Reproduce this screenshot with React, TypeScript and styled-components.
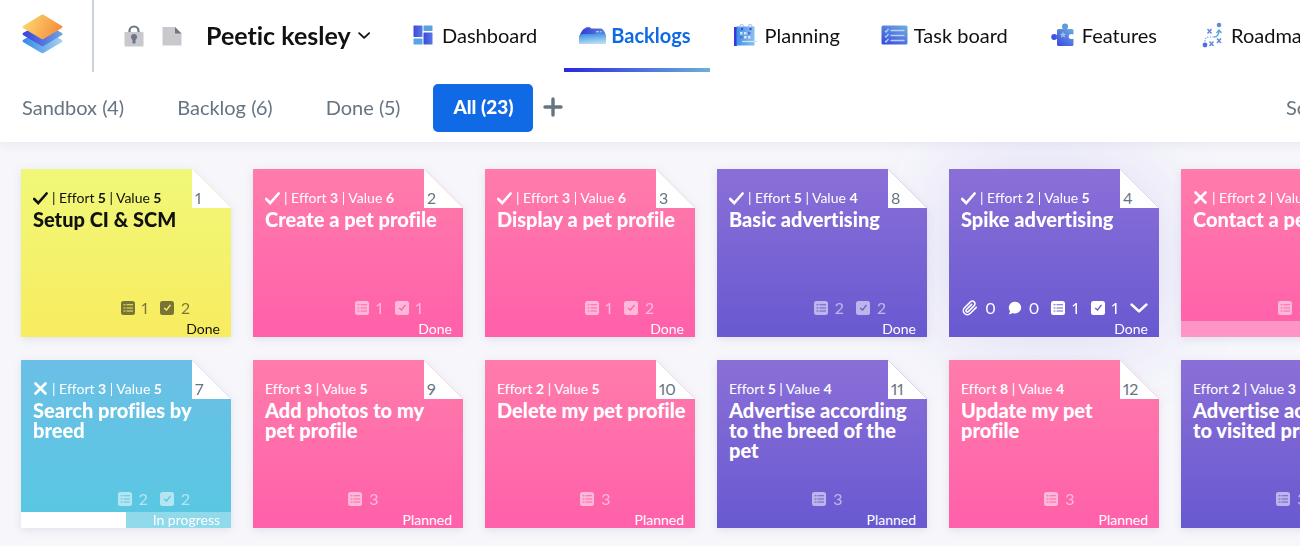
import React from "react";
import styled, { createGlobalStyle, css } from "styled-components";

const GlobalStyle = createGlobalStyle`
  *, *::before, *::after { box-sizing: border-box; }
  html, body, #root { height: 100%; }
  body {
    margin: 0;
    overflow-x: hidden;
    background: #f6f6fb;
    color: #111;
    font-family: Lato, "Liberation Sans", sans-serif;
    font-variant-ligatures: none;
    font-variant-numeric: proportional-nums;
  }
  button { font: inherit; color: inherit; border: 0; padding: 0; background: none; cursor: pointer; }
  a { color: inherit; text-decoration: none; }
  h1, h2, p { margin: 0; }
`;

const Page = styled.div`
  min-height: 100%;
  overflow: hidden;
`;

const Top = styled.header`
  position: relative;
  z-index: 2;
  min-width: 1360px;
  background: #fff;
  box-shadow: 0 0 12px rgba(60, 60, 110, 0.1);
`;

const Bar = styled.div`
  display: flex;
  align-items: center;
  height: 72px;
`;

const HomeLink = styled.a`
  display: flex;
  align-items: center;
  align-self: stretch;
  padding: 0 29px 4px 22px;
  border-right: 2px solid #ccd2dc;
`;

const ProjectFlags = styled.div`
  display: flex;
  align-items: center;
  gap: 18px;
  padding: 0 24px 0 30px;
`;

const ProjectButton = styled.button`
  display: flex;
  align-items: center;
  gap: 7px;
  width: 164px;
  padding-bottom: 2px;
  white-space: nowrap;
`;

const ProjectName = styled.h1`
  font-size: 25px;
  line-height: 32px;
  font-weight: 700;
`;

const MainNav = styled.nav`
  display: flex;
  align-self: stretch;
  gap: 8px;
  margin-left: 25px;
`;

const NavLink = styled.a<{ $active?: boolean }>`
  position: relative;
  display: flex;
  align-items: center;
  gap: 5px;
  padding: 0 19px 2px 14px;
  font-size: 20px;
  line-height: 28px;
  white-space: nowrap;
  ${(p) =>
    p.$active &&
    css`
      color: #106ae6;
      font-weight: 700;
      &::after {
        content: "";
        position: absolute;
        left: 0;
        right: 0;
        bottom: 0;
        height: 4px;
        background: linear-gradient(90deg, #2a27e0, #6bb0d8);
      }
    `}
`;

const NavIcon = styled.span`
  display: flex;
  justify-content: center;
  width: 28px;
`;

const FilterBar = styled.div`
  display: flex;
  align-items: center;
  height: 70px;
  padding: 2px 20px 0 2px;
  color: #667482;
  font-size: 20px;
  line-height: 28px;
`;

const Filter = styled.button<{ $active?: boolean }>`
  height: 48px;
  margin-right: 13px;
  padding: 0 20px 2px;
  border-radius: 5px;
  white-space: nowrap;
  ${(p) =>
    p.$active &&
    css`
      margin-right: 10px;
      background: #106ae6;
      color: #fff;
      font-size: 19px;
      font-weight: 900;
    `}
`;

const AddButton = styled.button`
  display: flex;
  padding-bottom: 2px;
`;

const SortButton = styled.button`
  width: 54px;
  margin-left: auto;
  padding-bottom: 2px;
  text-align: left;
`;

const Board = styled.main`
  display: grid;
  grid-template-columns: repeat(6, 210px);
  gap: 23px 22px;
  padding: 27px 21px 18px;
`;

const CardShell = styled.article<{ $selected?: boolean }>`
  position: relative;
  z-index: ${(p) => (p.$selected ? 0 : 1)};
  filter: ${(p) =>
    p.$selected
      ? "drop-shadow(0 0 40px rgba(90, 70, 210, 0.16))"
      : "drop-shadow(0 2px 4px rgba(40, 40, 90, 0.1))"};
`;

type Tone = "yellow" | "pink" | "purple" | "blue";

const gradients: Record<Tone, string> = {
  yellow: "linear-gradient(#f0f878, #f8ec60)",
  pink: "linear-gradient(#ff7cab, #ff60aa)",
  purple: "linear-gradient(#8b6fd8, #6859d0)",
  blue: "linear-gradient(#6bbfe6, #58c8e2)",
};

const CardBody = styled.div<{ $tone: Tone }>`
  display: flex;
  flex-direction: column;
  height: 168px;
  padding: 19px 0 0;
  background: ${(p) => gradients[p.$tone]};
  color: ${(p) => (p.$tone === "yellow" ? "#111" : "#fff")};
  clip-path: polygon(0 0, 171px 0, 100% 39px, 100% 100%, 0 100%);
`;

const Corner = styled.span`
  position: absolute;
  top: 0;
  right: 0;
  width: 39px;
  height: 39px;
  padding: 19px 0 0 3px;
  background: #fff;
  color: #667482;
  font-size: 16px;
  line-height: 20px;
`;

const Meta = styled.p`
  display: flex;
  align-items: center;
  gap: 4px;
  height: 20px;
  padding-left: 12px;
  font-size: 14px;
  line-height: 20px;
  white-space: nowrap;
`;

const Title = styled.h2`
  padding: 1px 6px 0 12px;
  font-size: 20px;
  line-height: 20px;
  font-weight: 900;
`;

const Counters = styled.div<{ $faded?: boolean }>`
  display: flex;
  align-items: center;
  justify-content: flex-end;
  margin-top: auto;
  padding-right: 11px;
  font-size: 16px;
  line-height: 20px;
  opacity: ${(p) => (p.$faded ? 0.55 : 1)};
`;

const Counter = styled.span<{ $hidden?: boolean }>`
  display: flex;
  align-items: center;
  gap: 7px;
  margin-right: 12px;
  visibility: ${(p) => (p.$hidden ? "hidden" : "visible")};
`;

const Expand = styled.button<{ $hidden?: boolean }>`
  display: flex;
  visibility: ${(p) => (p.$hidden ? "hidden" : "visible")};
`;

const Status = styled.div<{ $progress?: boolean }>`
  height: 16px;
  margin-top: 3px;
  padding-right: 11px;
  background: ${(p) => (p.$progress ? "rgba(255, 255, 255, 0.33)" : "none")};
  font-size: 14px;
  line-height: 15px;
  text-align: right;
`;

const Done = styled.div`
  position: absolute;
  left: 0;
  bottom: 0;
  height: 16px;
  background: #fff;
`;

const Svg = ({ w, h, box, children }: { w: number; h: number; box?: string; children: React.ReactNode }) => (
  <svg width={w} height={h} viewBox={box ?? `0 0 ${w} ${h}`} fill="none" aria-hidden="true">
    {children}
  </svg>
);

const Logo = () => (
  <Svg w={41} h={40}>
    <defs>
      <linearGradient id="lg1" x1="0" y1="0" x2="1" y2="0.3"><stop stopColor="#fbe071" /><stop offset="1" stopColor="#f79040" /></linearGradient>
      <linearGradient id="lg2" x1="0" x2="1"><stop stopColor="#3a3fdd" /><stop offset="1" stopColor="#6da6dc" /></linearGradient>
      <linearGradient id="lg3" x1="0" x2="1"><stop stopColor="#2f8ae8" /><stop offset="1" stopColor="#a9d2ef" /></linearGradient>
    </defs>
    <path d="M1 26 20.500 14 40 26Q41 27 40 28L21.500 39Q20.500 39.500 19.500 39L1 28Q0 27 1 26Z" fill="url(#lg3)" />
    <path d="M1 19 20.500 8 40 19Q41 20 40 21L21.500 32Q20.500 32.500 19.500 32L1 21Q0 20 1 19Z" fill="url(#lg2)" />
    <path d="M1 12 19.500 .7Q20.500 .2 21.500 .7L40 12Q41 13 40 14L21.500 25Q20.500 25.500 19.500 25L1 14Q0 13 1 12Z" fill="url(#lg1)" />
  </Svg>
);

const LockIcon = () => (
  <Svg w={20} h={22}>
    <path d="M5.500 9V6a4.500 4.500 0 0 1 9 0v3" stroke="#6b7785" strokeWidth="2.200" />
    <rect x=".5" y="7" width="19" height="14.500" rx="1" fill="#c9c8cd" />
    <circle cx="10" cy="12" r="3" fill="#6b7785" />
    <path d="M8.500 13h3v5.500h-3z" fill="#6b7785" />
  </Svg>
);

const NoteIcon = () => (
  <Svg w={20} h={20}>
    <path d="M.5 1H13l6.500 6.500V19.500H.5z" fill="#c9c8cd" />
    <path d="M13 1l6.500 6.500H13z" fill="#6b7785" />
  </Svg>
);

const NavGradient = ({ id }: { id: string }) => (
  <linearGradient id={id} x1="0" y1="1" x2=".8" y2="0">
    <stop stopColor="#3a43e0" />
    <stop offset="1" stopColor="#68a9dd" />
  </linearGradient>
);

const DashboardIcon = () => (
  <Svg w={20} h={20}>
    <defs><linearGradient id="da" x1="0" x2="1"><stop stopColor="#3c4adb" /><stop offset="1" stopColor="#5878e2" /></linearGradient></defs>
    <rect x=".5" y=".5" width="9" height="11.500" rx=".6" fill="url(#da)" />
    <rect x="10.500" y=".5" width="9" height="5.500" rx=".6" fill="#58a2e4" />
    <rect x=".5" y="13.500" width="9" height="6" rx=".6" fill="#5aa4e5" />
    <rect x="10.500" y="7.500" width="9" height="12" rx=".6" fill="url(#da)" />
  </Svg>
);

const BacklogsIcon = () => (
  <Svg w={27} h={17}>
    <defs>
      <linearGradient id="bl" x1="0" y1="0" x2=".2" y2="1"><stop offset=".1" stopColor="#3a8fe4" /><stop offset="1" stopColor="#b5daf3" /></linearGradient>
      <linearGradient id="bt" x1="0" x2="1"><stop stopColor="#3338d6" /><stop offset="1" stopColor="#5b83da" /></linearGradient>
    </defs>
    <path d="M5.500 1.500 7 1V.3h4l1 1.200h10c2 0 4.300 4 5 7.500v2H0C1 7 3.500 2 5.500 1.500z" fill="url(#bt)" />
    <path d="M0 9.500C1 7.200 2.500 7 5 7h9c3 0 3-.7 6-.7 4 0 7 1 7 3.200V16q0 1-1 1H1q-1 0-1-1z" fill="url(#bl)" />
    <path d="M17 4.800h3m1 0h1.500" stroke="#d7e6fa" />
  </Svg>
);

const PlanningIcon = () => (
  <Svg w={23} h={22}>
    <defs><linearGradient id="pl" x1="0" x2="1"><stop stopColor="#3f90e5" /><stop offset="1" stopColor="#8cc0ec" /></linearGradient></defs>
    <path d="M0 3h3v18.500H3V22H0z" fill="#3a36de" />
    <path d="M2.500 2.500H20.500V21.500H2.500z" fill="url(#pl)" />
    <path d="M6 4V2a1.700 1.700 0 0 1 3.400 0v1M14.500 4V2a1.700 1.700 0 0 1 3.400 0v1" stroke="#a9b7f1" />
    <circle cx="8" cy="5" r="1.200" fill="#3c49da" /><circle cx="16.500" cy="5" r="1.200" fill="#3c49da" />
    <path d="M6 8h2.500v2.500H6zM10 8h2.500v2.500H10zM10 12h2.500v2.500H10zM14 12h2.500v2.500H14z" fill="#d5e6fa" />
    <path d="M14 8h2.500v2.500H14zM6 12h2.500v2.500H6z" fill="#5570df" />
    <path d="M8 17.500h15" stroke="#c8e0f8" strokeWidth="1.300" />
  </Svg>
);

const TaskIcon = () => (
  <Svg w={27} h={20}>
    <defs><NavGradient id="tb" /></defs>
    <rect x=".5" y=".5" width="26" height="19" rx="1.500" fill="url(#tb)" />
    <path d="M10 5.500h13M10 10.500h13M10 15.500h13" stroke="#b9cff5" strokeWidth="1.300" strokeLinecap="round" />
    <path d="m4 6 1 1 2.500-3M4 11l1 1 2.500-3M4 16l1 1 2.500-3" stroke="#a6d9ef" strokeWidth="1.200" />
  </Svg>
);

const FeaturesIcon = () => (
  <Svg w={23} h={24}>
    <defs><NavGradient id="fe" /></defs>
    <circle cx="14" cy="3.500" r="3" fill="#5f98dc" />
    <circle cx="3.200" cy="14" r="3" fill="#3f53df" />
    <path fillRule="evenodd" d="M12.500 5h3v1H21q1.500 0 1.500 1.500V11.500c-1.200-1-4.800-1-4.800 2s3.600 3 4.800 2V21.500q0 1.500-1.500 1.500H7.500Q6 23 6 21.500V15.500H4.500v-3H6V7.500Q6 6 7.500 6h5z" fill="url(#fe)" />
    <path d="m12 8.500 1 2.200 2.300.2-1.700 1.500.5 2.300-2.100-1.200-2 1.200.5-2.300-1.800-1.500 2.300-.2z" fill="#9db9f1" />
  </Svg>
);

const RoadmapIcon = () => (
  <Svg w={20} h={26}>
    <circle cx="17" cy="3" r="2.300" fill="#5b8de0" />
    <circle cx="3" cy="23" r="2.400" fill="#4a6ddf" />
    <path d="M3 19.500c0-4 2-4.500 5-4.500h3" stroke="#6d9be3" strokeWidth="1.200" strokeDasharray="1.200 1.400" />
    <path d="M11.500 15c4 0 5.500-2 5.500-6.500M14.500 11 17 8l2.500 3" stroke="#55a5dc" strokeWidth="1.300" />
    <path d="m5.500 7 4 4.500m0-4.500-4 4.500M7.500 19.500l4 4.500m0-4.500-4 4.500M15 16.500l4 4.500m0-4.500-4 4.500" stroke="#5c86e0" strokeWidth="1.400" />
  </Svg>
);

const PlusIcon = () => (
  <Svg w={20} h={20}>
    <path d="M10 2v16M2 10h16" stroke="#667482" strokeWidth="3.400" strokeLinecap="round" />
  </Svg>
);

const ChevronIcon = ({ w }: { w: number }) => (
  <Svg w={w} h={w} box="0 0 16 16">
    <path d="m1.500 5 6.500 6 6.500-6" stroke="currentColor" strokeWidth="2.400" strokeLinecap="round" strokeLinejoin="round" />
  </Svg>
);

const TickIcon = () => (
  <Svg w={15} h={14}>
    <path d="m1.200 8 4 4L13.600 2.500" stroke="currentColor" strokeWidth="2.600" strokeLinecap="round" />
  </Svg>
);

const CrossIcon = () => (
  <Svg w={15} h={14}>
    <path d="m2.500 1.500 10 10m0-10-10 10" stroke="currentColor" strokeWidth="2.600" strokeLinecap="round" />
  </Svg>
);

const ClipIcon = () => (
  <Svg w={16} h={16} box="0 0 24 24">
    <path d="m21.400 11-9.200 9.200a6 6 0 0 1-8.500-8.500l8.600-8.500a4 4 0 1 1 5.600 5.600l-8.500 8.600a2 2 0 0 1-2.900-2.900l8-8" stroke="currentColor" strokeWidth="2.300" strokeLinecap="round" />
  </Svg>
);

const BubbleIcon = () => (
  <Svg w={14} h={14}>
    <path d="M7.300.8a6 5.800 0 1 1-2.600 11.100Q2.800 13.200.7 13.200 1.900 12 2 10A6 5.800 0 0 1 7.300.8z" fill="currentColor" />
  </Svg>
);

const ListIcon = () => (
  <Svg w={14} h={14}>
    <path fillRule="evenodd" d="M2.500 0h9A2.500 2.500 0 0 1 14 2.500v9a2.500 2.500 0 0 1-2.500 2.500h-9A2.500 2.500 0 0 1 0 11.500v-9A2.500 2.500 0 0 1 2.500 0zM2.500 3.300v1h2v-1zm3 0v1h6.500v-1zM2.500 6.400v1h2v-1zm3 0v1h6.500v-1zM2.500 9.500v1h2v-1zm3 0v1h6.500v-1z" fill="currentColor" />
  </Svg>
);

const CheckBoxIcon = () => (
  <Svg w={14} h={14}>
    <path fillRule="evenodd" d="M2.500 0h9A2.500 2.500 0 0 1 14 2.500v9a2.500 2.500 0 0 1-2.500 2.500h-9A2.500 2.500 0 0 1 0 11.500v-9A2.500 2.500 0 0 1 2.500 0zM9.900 3.400 6.400 8 4.600 6.500l-.9 1.100 2.900 2.500 4.500-5.800z" fill="currentColor" />
  </Svg>
);

interface Story {
  id: number;
  title: string;
  effort: number;
  value: number;
  mark?: "tick" | "cross";
  tone: Tone;
  tasks: number;
  tests?: number;
  status: string;
  progress?: number;
  selected?: boolean;
}

const stories: Story[] = [
  { id: 1, title: "Setup CI & SCM", effort: 5, value: 5, mark: "tick", tone: "yellow", tasks: 1, tests: 2, status: "Done" },
  { id: 2, title: "Create a pet profile", effort: 3, value: 6, mark: "tick", tone: "pink", tasks: 1, tests: 1, status: "Done" },
  { id: 3, title: "Display a pet profile", effort: 3, value: 6, mark: "tick", tone: "pink", tasks: 1, tests: 2, status: "Done" },
  { id: 8, title: "Basic advertising", effort: 5, value: 4, mark: "tick", tone: "purple", tasks: 2, tests: 2, status: "Done" },
  { id: 4, title: "Spike advertising", effort: 2, value: 5, mark: "tick", tone: "purple", tasks: 1, tests: 1, status: "Done", selected: true },
  { id: 5, title: "Contact a pet owner", effort: 2, value: 5, mark: "cross", tone: "pink", tasks: 2, tests: 2, status: "In progress", progress: 0 },
  { id: 7, title: "Search profiles by breed", effort: 3, value: 5, mark: "cross", tone: "blue", tasks: 2, tests: 2, status: "In progress", progress: 50 },
  { id: 9, title: "Add photos to my pet profile", effort: 3, value: 5, tone: "pink", tasks: 3, status: "Planned" },
  { id: 10, title: "Delete my pet profile", effort: 2, value: 5, tone: "pink", tasks: 3, status: "Planned" },
  { id: 11, title: "Advertise according to the breed of the pet", effort: 5, value: 4, tone: "purple", tasks: 3, status: "Planned" },
  { id: 12, title: "Update my pet profile", effort: 8, value: 4, tone: "pink", tasks: 3, status: "Planned" },
  { id: 13, title: "Advertise according to visited profiles", effort: 2, value: 3, tone: "purple", tasks: 3, status: "Planned" },
];

const StoryCard = ({ story }: { story: Story }) => (
  <CardShell $selected={story.selected}>
    <CardBody $tone={story.tone}>
      <Corner>{story.id}</Corner>
      <Meta>
        {story.mark === "tick" && <TickIcon />}
        {story.mark === "cross" && <CrossIcon />}
        <span>
          {story.mark && "| "}Effort <b>{story.effort}</b> | Value <b>{story.value}</b>
        </span>
      </Meta>
      <Title>{story.title}</Title>
      <Counters $faded={!story.selected}>
        {story.selected && (
          <>
            <Counter><ClipIcon />0</Counter>
            <Counter><BubbleIcon />0</Counter>
          </>
        )}
        <Counter><ListIcon />{story.tasks}</Counter>
        <Counter $hidden={story.tests === undefined}><CheckBoxIcon />{story.tests ?? 0}</Counter>
        <Expand $hidden={!story.selected} aria-label="Show more"><ChevronIcon w={18} /></Expand>
      </Counters>
      <Status $progress={story.progress !== undefined}>{story.status}</Status>
      {story.progress !== undefined && <Done style={{ width: `${story.progress}%` }} />}
    </CardBody>
  </CardShell>
);

const navItems = [
  { label: "Dashboard", icon: <DashboardIcon /> },
  { label: "Backlogs", icon: <BacklogsIcon />, active: true },
  { label: "Planning", icon: <PlanningIcon /> },
  { label: "Task board", icon: <TaskIcon /> },
  { label: "Features", icon: <FeaturesIcon /> },
  { label: "Roadmap", icon: <RoadmapIcon /> },
];

export default function App() {
  return (
    <Page>
      <GlobalStyle />
      <Top>
        <Bar>
          <HomeLink href="#" aria-label="Home"><Logo /></HomeLink>
          <ProjectFlags><LockIcon /><NoteIcon /></ProjectFlags>
          <ProjectButton>
            <ProjectName>Peetic kesley</ProjectName>
            <ChevronIcon w={13} />
          </ProjectButton>
          <MainNav>
            {navItems.map((item) => (
              <NavLink key={item.label} href="#" $active={item.active}>
                <NavIcon>{item.icon}</NavIcon>
                {item.label}
              </NavLink>
            ))}
          </MainNav>
        </Bar>
        <FilterBar>
          <Filter>Sandbox (4)</Filter>
          <Filter>Backlog (6)</Filter>
          <Filter>Done (5)</Filter>
          <Filter $active>All (23)</Filter>
          <AddButton aria-label="Add filter"><PlusIcon /></AddButton>
          <SortButton>Sort</SortButton>
        </FilterBar>
      </Top>
      <Board>
        {stories.map((story) => (
          <StoryCard key={story.id} story={story} />
        ))}
      </Board>
    </Page>
  );
}
